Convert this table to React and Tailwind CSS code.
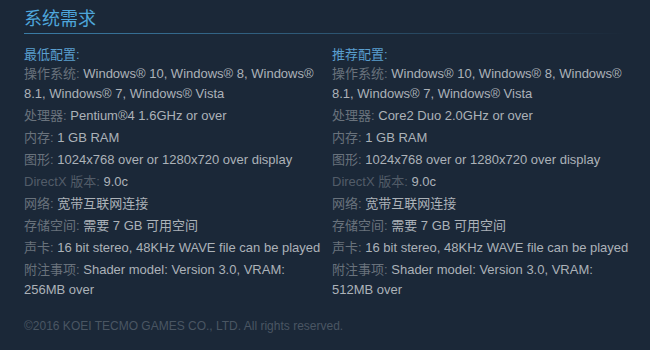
import React from 'react';

const minimum = [
  { label: '操作系统:', value: 'Windows® 10, Windows® 8, Windows® 8.1, Windows® 7, Windows® Vista' },
  { label: '处理器:', value: 'Pentium®4 1.6GHz or over' },
  { label: '内存:', value: '1 GB RAM' },
  { label: '图形:', value: '1024x768 over or 1280x720 over display' },
  { label: 'DirectX 版本:', value: '9.0c', dim: true },
  { label: '网络:', value: '宽带互联网连接' },
  { label: '存储空间:', value: '需要 7 GB 可用空间' },
  { label: '声卡:', value: '16 bit stereo, 48KHz WAVE file can be played' },
  { label: '附注事项:', value: 'Shader model: Version 3.0, VRAM: 256MB over' },
];

const recommended = [
  { label: '操作系统:', value: 'Windows® 10, Windows® 8, Windows® 8.1, Windows® 7, Windows® Vista' },
  { label: '处理器:', value: 'Core2 Duo 2.0GHz or over' },
  { label: '内存:', value: '1 GB RAM' },
  { label: '图形:', value: '1024x768 over or 1280x720 over display' },
  { label: 'DirectX 版本:', value: '9.0c', dim: true },
  { label: '网络:', value: '宽带互联网连接' },
  { label: '存储空间:', value: '需要 7 GB 可用空间' },
  { label: '声卡:', value: '16 bit stereo, 48KHz WAVE file can be played' },
  { label: '附注事项:', value: 'Shader model: Version 3.0, VRAM: 512MB over' },
];

const ReqColumn = ({ title, items }) => (
  <div className="w-[300px] shrink-0">
    <div className="text-[13px] leading-[19px] text-[#5a9fcf]">{title}</div>
    <ul>
      {items.map((item, i) => (
        <li key={i} className="text-[13px] leading-[20px] mb-[2px] text-[#acb2b8]">
          <span className={item.dim ? 'text-[#525c68]' : 'text-[#69727c]'}>{item.label}</span>{' '}
          {item.value}
        </li>
      ))}
    </ul>
  </div>
);

export default function App() {
  return (
    <div
      className="w-[650px] h-[350px] bg-[#1b2838] pl-6 pr-6 pt-[7px] overflow-hidden"
      style={{ fontFamily: '"Liberation Sans", Arial, "Noto Sans CJK SC", sans-serif' }}
    >
      {/* 标题 */}
      <h2 className="text-[18px] leading-[24px] text-[#4ea6db] pb-[2px]">系统需求</h2>
      <div className="h-px w-full bg-gradient-to-r from-[#3a7ca6] via-[#2d5673] to-transparent" />

      {/* 配置列 */}
      <div className="flex gap-2 mt-[11px]">
        <ReqColumn title="最低配置:" items={minimum} />
        <ReqColumn title="推荐配置:" items={recommended} />
      </div>

      <div className="mt-[16px] text-[12px] leading-[16px] text-[#4a5663]">
        ©2016 KOEI TECMO GAMES CO., LTD. All rights reserved.
      </div>
    </div>
  );
}
